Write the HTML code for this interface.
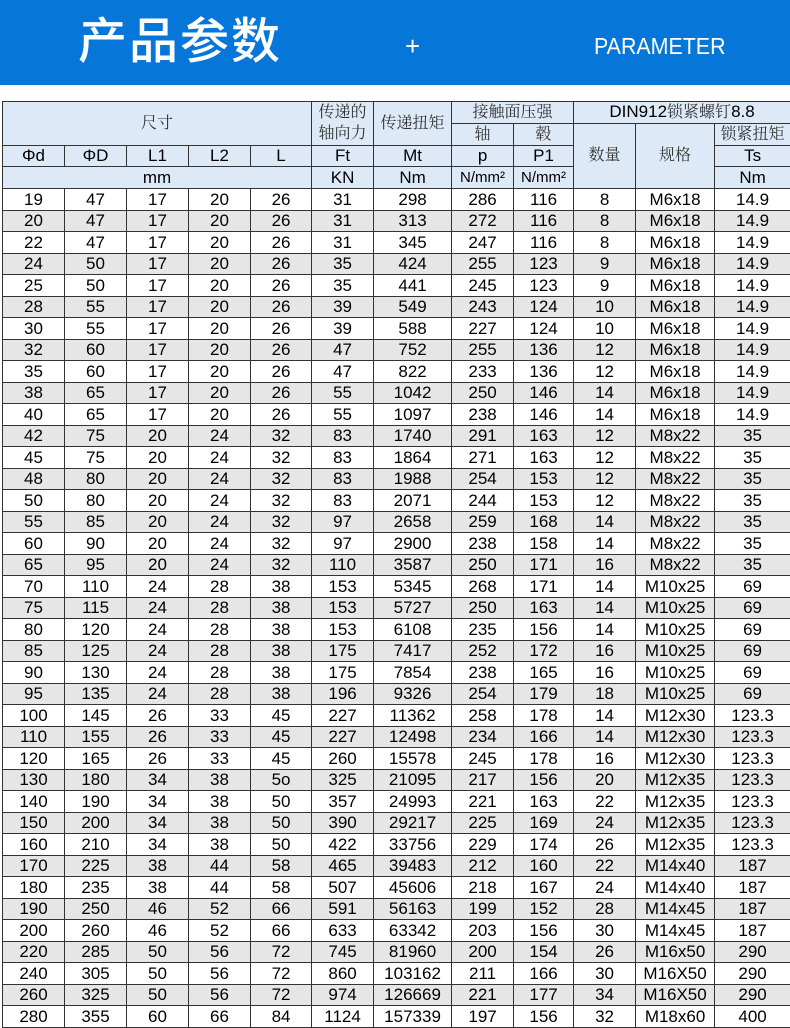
<!DOCTYPE html>
<html><head><meta charset="utf-8"><style>
*{margin:0;padding:0;box-sizing:border-box}
body{width:790px;height:1026px;background:#fff;overflow:hidden;position:relative;font-family:"Liberation Sans",Arial,sans-serif}
.banner{position:absolute;left:0;top:0;width:790px;height:85px;background:#0677d8;color:#fff}
.t1{position:absolute;left:78px;top:12px;font-size:49px;font-family:"Liberation Sans","Noto Sans CJK SC",sans-serif;font-weight:500;letter-spacing:2px;line-height:60px}
.plus{position:absolute;left:405px;top:31px;font-size:26px;line-height:30px}
.t2{position:absolute;left:594px;top:33px;font-size:23px;line-height:26px;transform:scaleX(0.93);transform-origin:left}
table{position:absolute;left:2px;top:101px;border-collapse:collapse;table-layout:fixed;width:788px}
td{border:1px solid #333;text-align:center;font-size:17px;height:21.5px;line-height:19px;padding:0;color:#000;white-space:nowrap;overflow:hidden}
thead td{background:#dde9f6;height:21.75px}
.cn{font-family:"Liberation Serif","Noto Serif CJK SC",serif;color:#333;font-size:16px}
.n2{font-size:15px}
tbody tr:nth-child(even) td{background:#e6e6e6}
</style></head><body>
<div class="banner"><div class="t1">产品参数</div><div class="plus">+</div><div class="t2">PARAMETER</div></div>
<table>
<colgroup><col style="width:62px"><col style="width:62px"><col style="width:62px"><col style="width:62px"><col style="width:61px"><col style="width:62px"><col style="width:78px"><col style="width:62px"><col style="width:60px"><col style="width:62px"><col style="width:79px"><col style="width:76px"></colgroup>
<thead>
<tr><td colspan="5" rowspan="2" class="cn">尺寸</td><td rowspan="2" class="cn" style="line-height:21px">传递的<br>轴向力</td><td rowspan="2" class="cn">传递扭矩</td><td colspan="2" class="cn">接触面压强</td><td colspan="3">DIN912<span class="cn">锁紧螺钉</span>8.8</td></tr>
<tr><td class="cn">轴</td><td class="cn">毂</td><td rowspan="3" class="cn">数量</td><td rowspan="3" class="cn">规格</td><td class="cn">锁紧扭矩</td></tr>
<tr><td>Φd</td><td>ΦD</td><td>L1</td><td>L2</td><td>L</td><td>Ft</td><td>Mt</td><td>p</td><td>P1</td><td>Ts</td></tr>
<tr><td colspan="5">mm</td><td>KN</td><td>Nm</td><td class="n2">N/mm²</td><td class="n2">N/mm²</td><td>Nm</td></tr>
</thead>
<tbody>
<tr><td>19</td><td>47</td><td>17</td><td>20</td><td>26</td><td>31</td><td>298</td><td>286</td><td>116</td><td>8</td><td>M6x18</td><td>14.9</td></tr>
<tr><td>20</td><td>47</td><td>17</td><td>20</td><td>26</td><td>31</td><td>313</td><td>272</td><td>116</td><td>8</td><td>M6x18</td><td>14.9</td></tr>
<tr><td>22</td><td>47</td><td>17</td><td>20</td><td>26</td><td>31</td><td>345</td><td>247</td><td>116</td><td>8</td><td>M6x18</td><td>14.9</td></tr>
<tr><td>24</td><td>50</td><td>17</td><td>20</td><td>26</td><td>35</td><td>424</td><td>255</td><td>123</td><td>9</td><td>M6x18</td><td>14.9</td></tr>
<tr><td>25</td><td>50</td><td>17</td><td>20</td><td>26</td><td>35</td><td>441</td><td>245</td><td>123</td><td>9</td><td>M6x18</td><td>14.9</td></tr>
<tr><td>28</td><td>55</td><td>17</td><td>20</td><td>26</td><td>39</td><td>549</td><td>243</td><td>124</td><td>10</td><td>M6x18</td><td>14.9</td></tr>
<tr><td>30</td><td>55</td><td>17</td><td>20</td><td>26</td><td>39</td><td>588</td><td>227</td><td>124</td><td>10</td><td>M6x18</td><td>14.9</td></tr>
<tr><td>32</td><td>60</td><td>17</td><td>20</td><td>26</td><td>47</td><td>752</td><td>255</td><td>136</td><td>12</td><td>M6x18</td><td>14.9</td></tr>
<tr><td>35</td><td>60</td><td>17</td><td>20</td><td>26</td><td>47</td><td>822</td><td>233</td><td>136</td><td>12</td><td>M6x18</td><td>14.9</td></tr>
<tr><td>38</td><td>65</td><td>17</td><td>20</td><td>26</td><td>55</td><td>1042</td><td>250</td><td>146</td><td>14</td><td>M6x18</td><td>14.9</td></tr>
<tr><td>40</td><td>65</td><td>17</td><td>20</td><td>26</td><td>55</td><td>1097</td><td>238</td><td>146</td><td>14</td><td>M6x18</td><td>14.9</td></tr>
<tr><td>42</td><td>75</td><td>20</td><td>24</td><td>32</td><td>83</td><td>1740</td><td>291</td><td>163</td><td>12</td><td>M8x22</td><td>35</td></tr>
<tr><td>45</td><td>75</td><td>20</td><td>24</td><td>32</td><td>83</td><td>1864</td><td>271</td><td>163</td><td>12</td><td>M8x22</td><td>35</td></tr>
<tr><td>48</td><td>80</td><td>20</td><td>24</td><td>32</td><td>83</td><td>1988</td><td>254</td><td>153</td><td>12</td><td>M8x22</td><td>35</td></tr>
<tr><td>50</td><td>80</td><td>20</td><td>24</td><td>32</td><td>83</td><td>2071</td><td>244</td><td>153</td><td>12</td><td>M8x22</td><td>35</td></tr>
<tr><td>55</td><td>85</td><td>20</td><td>24</td><td>32</td><td>97</td><td>2658</td><td>259</td><td>168</td><td>14</td><td>M8x22</td><td>35</td></tr>
<tr><td>60</td><td>90</td><td>20</td><td>24</td><td>32</td><td>97</td><td>2900</td><td>238</td><td>158</td><td>14</td><td>M8x22</td><td>35</td></tr>
<tr><td>65</td><td>95</td><td>20</td><td>24</td><td>32</td><td>110</td><td>3587</td><td>250</td><td>171</td><td>16</td><td>M8x22</td><td>35</td></tr>
<tr><td>70</td><td>110</td><td>24</td><td>28</td><td>38</td><td>153</td><td>5345</td><td>268</td><td>171</td><td>14</td><td>M10x25</td><td>69</td></tr>
<tr><td>75</td><td>115</td><td>24</td><td>28</td><td>38</td><td>153</td><td>5727</td><td>250</td><td>163</td><td>14</td><td>M10x25</td><td>69</td></tr>
<tr><td>80</td><td>120</td><td>24</td><td>28</td><td>38</td><td>153</td><td>6108</td><td>235</td><td>156</td><td>14</td><td>M10x25</td><td>69</td></tr>
<tr><td>85</td><td>125</td><td>24</td><td>28</td><td>38</td><td>175</td><td>7417</td><td>252</td><td>172</td><td>16</td><td>M10x25</td><td>69</td></tr>
<tr><td>90</td><td>130</td><td>24</td><td>28</td><td>38</td><td>175</td><td>7854</td><td>238</td><td>165</td><td>16</td><td>M10x25</td><td>69</td></tr>
<tr><td>95</td><td>135</td><td>24</td><td>28</td><td>38</td><td>196</td><td>9326</td><td>254</td><td>179</td><td>18</td><td>M10x25</td><td>69</td></tr>
<tr><td>100</td><td>145</td><td>26</td><td>33</td><td>45</td><td>227</td><td>11362</td><td>258</td><td>178</td><td>14</td><td>M12x30</td><td>123.3</td></tr>
<tr><td>110</td><td>155</td><td>26</td><td>33</td><td>45</td><td>227</td><td>12498</td><td>234</td><td>166</td><td>14</td><td>M12x30</td><td>123.3</td></tr>
<tr><td>120</td><td>165</td><td>26</td><td>33</td><td>45</td><td>260</td><td>15578</td><td>245</td><td>178</td><td>16</td><td>M12x30</td><td>123.3</td></tr>
<tr><td>130</td><td>180</td><td>34</td><td>38</td><td>5o</td><td>325</td><td>21095</td><td>217</td><td>156</td><td>20</td><td>M12x35</td><td>123.3</td></tr>
<tr><td>140</td><td>190</td><td>34</td><td>38</td><td>50</td><td>357</td><td>24993</td><td>221</td><td>163</td><td>22</td><td>M12x35</td><td>123.3</td></tr>
<tr><td>150</td><td>200</td><td>34</td><td>38</td><td>50</td><td>390</td><td>29217</td><td>225</td><td>169</td><td>24</td><td>M12x35</td><td>123.3</td></tr>
<tr><td>160</td><td>210</td><td>34</td><td>38</td><td>50</td><td>422</td><td>33756</td><td>229</td><td>174</td><td>26</td><td>M12x35</td><td>123.3</td></tr>
<tr><td>170</td><td>225</td><td>38</td><td>44</td><td>58</td><td>465</td><td>39483</td><td>212</td><td>160</td><td>22</td><td>M14x40</td><td>187</td></tr>
<tr><td>180</td><td>235</td><td>38</td><td>44</td><td>58</td><td>507</td><td>45606</td><td>218</td><td>167</td><td>24</td><td>M14x40</td><td>187</td></tr>
<tr><td>190</td><td>250</td><td>46</td><td>52</td><td>66</td><td>591</td><td>56163</td><td>199</td><td>152</td><td>28</td><td>M14x45</td><td>187</td></tr>
<tr><td>200</td><td>260</td><td>46</td><td>52</td><td>66</td><td>633</td><td>63342</td><td>203</td><td>156</td><td>30</td><td>M14x45</td><td>187</td></tr>
<tr><td>220</td><td>285</td><td>50</td><td>56</td><td>72</td><td>745</td><td>81960</td><td>200</td><td>154</td><td>26</td><td>M16x50</td><td>290</td></tr>
<tr><td>240</td><td>305</td><td>50</td><td>56</td><td>72</td><td>860</td><td>103162</td><td>211</td><td>166</td><td>30</td><td>M16X50</td><td>290</td></tr>
<tr><td>260</td><td>325</td><td>50</td><td>56</td><td>72</td><td>974</td><td>126669</td><td>221</td><td>177</td><td>34</td><td>M16X50</td><td>290</td></tr>
<tr><td>280</td><td>355</td><td>60</td><td>66</td><td>84</td><td>1124</td><td>157339</td><td>197</td><td>156</td><td>32</td><td>M18x60</td><td>400</td></tr>
</tbody>
</table>
</body></html>
